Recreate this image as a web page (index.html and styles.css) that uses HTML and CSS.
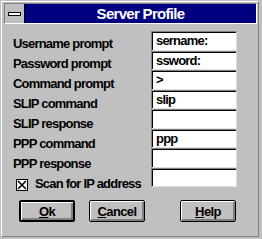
FILE: index.html
```html
<!DOCTYPE html>
<html lang="en">
<head>
    <meta charset="UTF-8">
    <title>Server Profile</title>
    <link rel="stylesheet" href="styles.css">
</head>
<body>
    <div class="window">
        <div class="frame">
            <div class="titlebar">
                <div class="sysmenu"><span class="dash"></span></div>
                <div class="caption">Server Profile</div>
            </div>

            <div class="form">
                <div class="labels">
                    <div class="label">Username prompt</div>
                    <div class="label">Password prompt</div>
                    <div class="label">Command prompt</div>
                    <div class="label">SLIP command</div>
                    <div class="label">SLIP response</div>
                    <div class="label">PPP command</div>
                    <div class="label">PPP response</div>
                    <div class="label check-row">
                        <span class="checkbox">
                            <svg width="10" height="10" viewBox="0 0 10 10">
                                <path d="M1 1L9 9M9 1L1 9" stroke="#000" stroke-width="1.6"/>
                            </svg>
                        </span>
                        <span>Scan for IP address</span>
                    </div>
                </div>
                <div class="fields">
                    <div class="field">sername:</div>
                    <div class="field">ssword:</div>
                    <div class="field">&gt;</div>
                    <div class="field">slip</div>
                    <div class="field"></div>
                    <div class="field">ppp</div>
                    <div class="field"></div>
                    <div class="field"></div>
                </div>
            </div>

            <div class="buttons">
                <button class="btn default"><u>O</u>k</button>
                <button class="btn"><u>C</u>ancel</button>
                <button class="btn help"><u>H</u>elp</button>
            </div>
        </div>
    </div>
</body>
</html>
```

FILE: styles.css
```css
* {
    margin: 0;
    padding: 0;
    box-sizing: border-box;
}

body {
    background: #c0c0c0;
    font-family: "Liberation Sans", Arial, sans-serif;
    font-weight: bold;
    font-size: 13px;
    color: #000;
}

.window {
    width: 262px;
    height: 239px;
    background: #c0c0c0;
    padding: 1px 3px 2px 1px;
}

.frame {
    height: 100%;
    border-left: 1px solid #fff;
    border-top: 1px solid #fff;
    border-right: 1px solid #808080;
    border-bottom: 1px solid #808080;
    padding: 1px 1px 0 2px;
}

/* title bar */
.titlebar {
    display: flex;
    height: 21px;
    border-top: 1px solid #808080;
    border-left: 1px solid #808080;
    border-right: 1px solid #fff;
    border-bottom: 1px solid #fff;
}

.sysmenu {
    width: 20px;
    border-right: 1px solid #000;
    background: #c0c0c0;
    padding: 8px 0 0 3px;
}

.dash {
    display: block;
    width: 13px;
    height: 4px;
    background: #fff;
    border: 1px solid #000;
}

.caption {
    flex: 1;
    background: #000080;
    color: #fff;
    font-size: 15px;
    letter-spacing: -0.7px;
    line-height: 19px;
    text-align: center;
}

/* form */
.form {
    display: flex;
    height: 176px;
}

.labels {
    width: 147px;
    padding: 10px 0 0 9px;
}

.label {
    height: 20px;
    line-height: 20px;
    letter-spacing: -0.8px;
    white-space: nowrap;
}

.check-row {
    display: flex;
    align-items: center;
}

.checkbox {
    width: 12px;
    height: 12px;
    margin: 1px 7px 0 3px;
    background: #fff;
    border: 1px solid #000;
    display: flex;
    align-items: center;
    justify-content: center;
}

.fields {
    width: 86px;
    padding-top: 7px;
}

.field {
    height: 19.5px;
    background: #fff;
    border-top: 1px solid #808080;
    border-left: 1px solid #808080;
    border-right: 1px solid #dfdfdf;
    border-bottom: 1px solid #dfdfdf;
    box-shadow: inset 1px 1px 0 #000;
    padding: 1px 0 0 4px;
    line-height: 16px;
    letter-spacing: -0.8px;
    overflow: hidden;
    white-space: nowrap;
}

/* buttons */
.buttons {
    display: flex;
    gap: 14px;
    padding: 0 21px 0 15px;
}

.btn {
    width: 56px;
    height: 22px;
    font-family: inherit;
    font-weight: bold;
    font-size: 13px;
    letter-spacing: -0.6px;
    color: #000;
    background: #c0c0c0;
    border: 1px solid #000;
    border-radius: 2px;
    box-shadow: inset 1px 1px 0 #fff, inset -1px -1px 0 #808080, inset -2px -2px 0 #808080;
}

.btn.default {
    border-width: 2px;
}

.btn.help {
    margin-left: auto;
}
```
